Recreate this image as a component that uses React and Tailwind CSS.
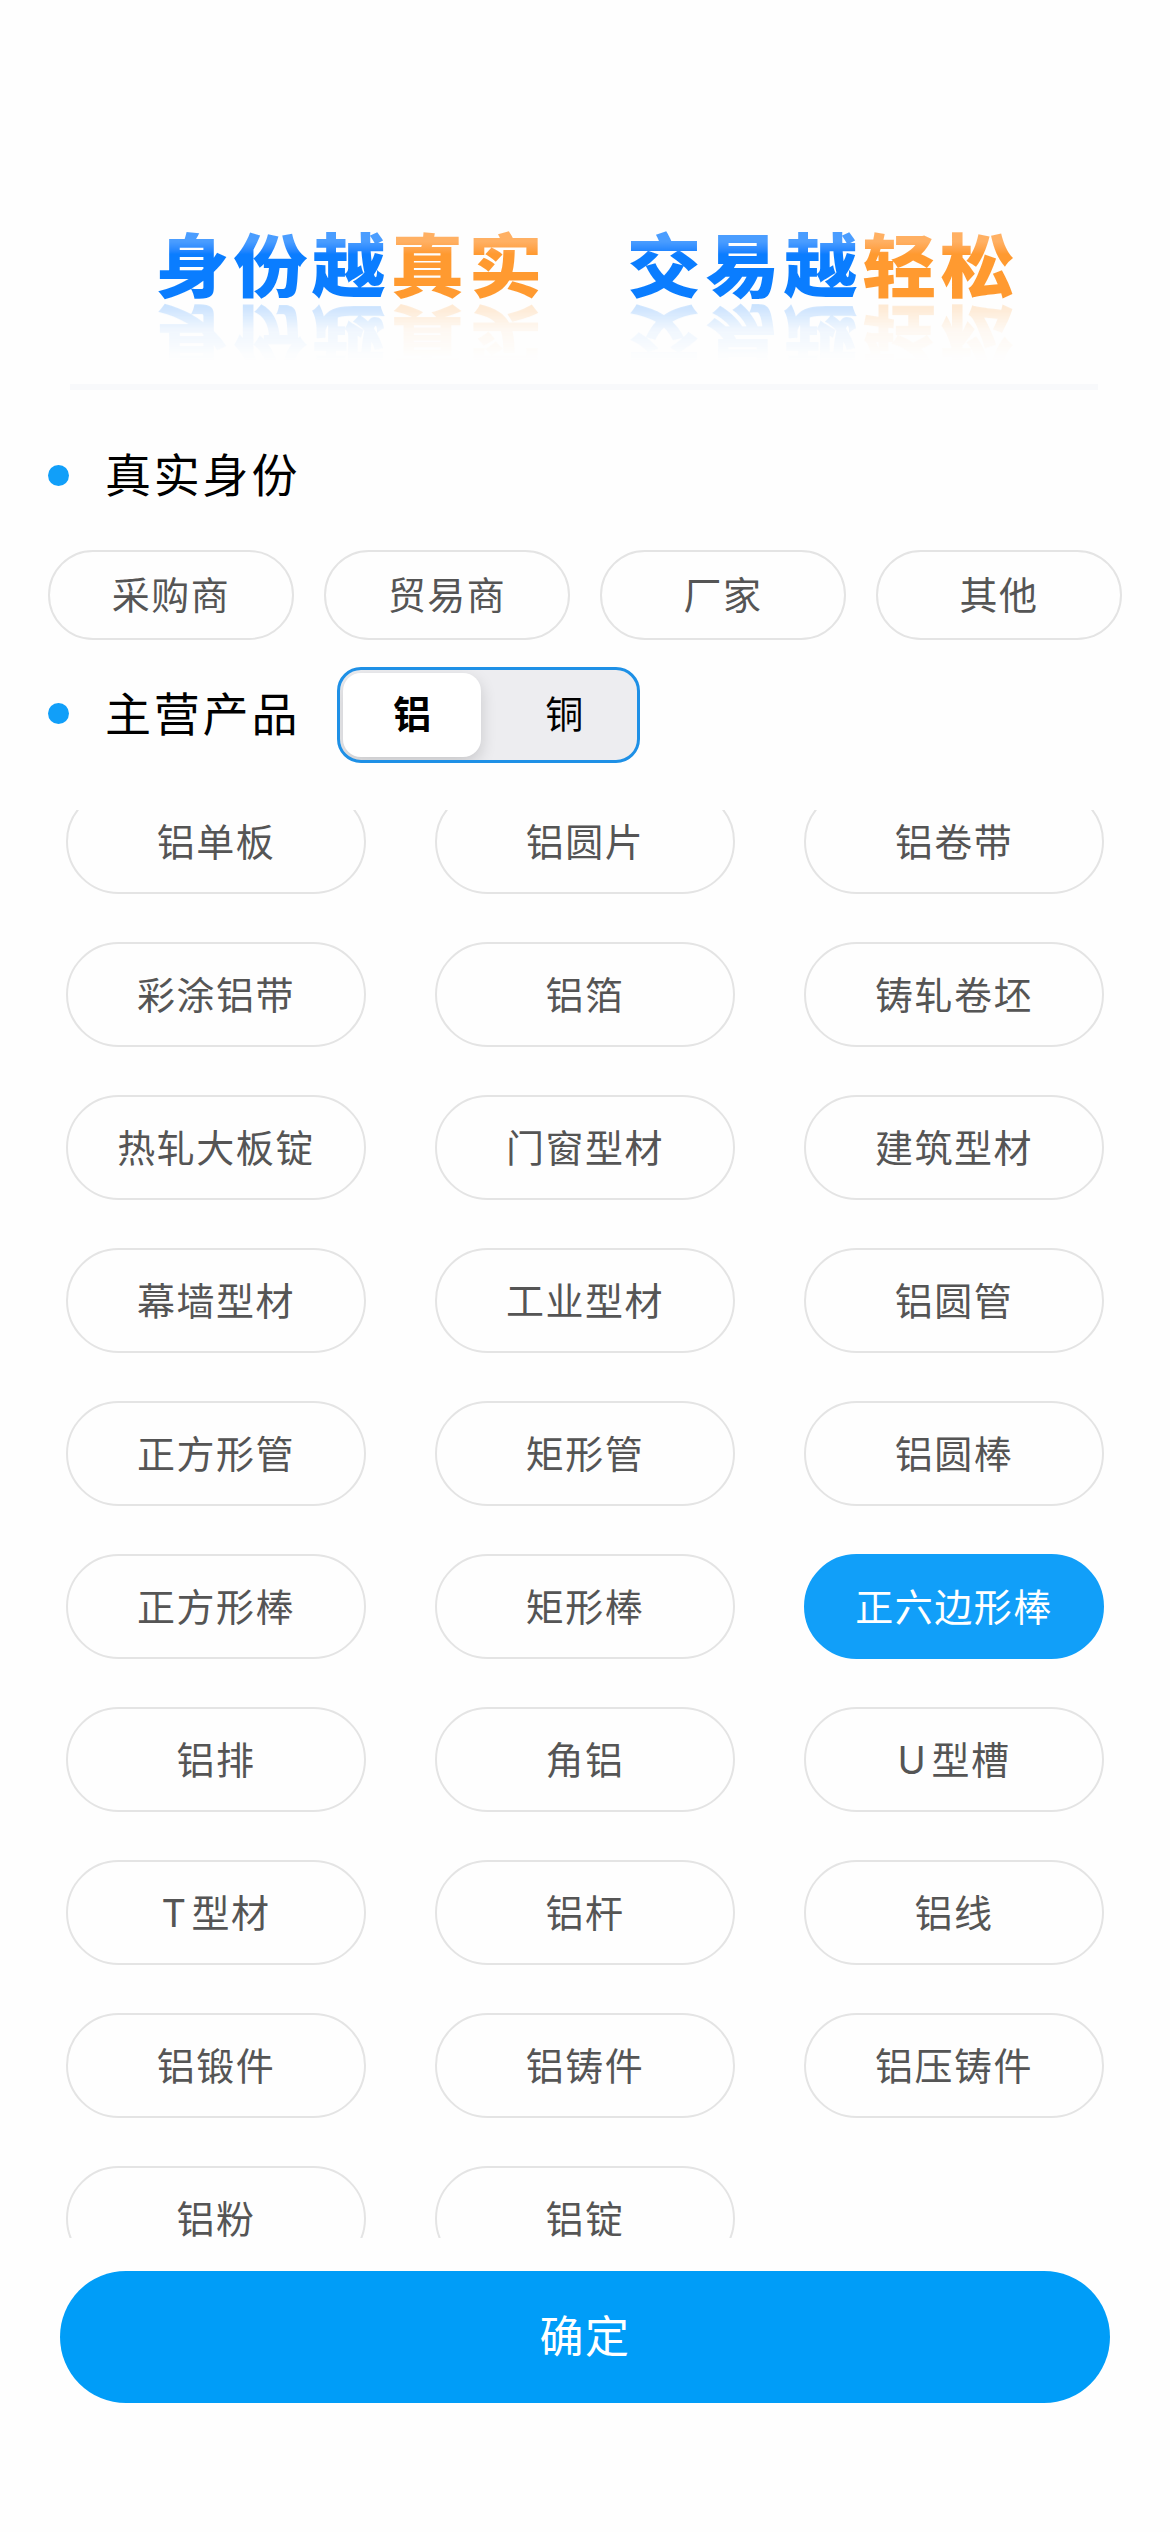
import { useState } from "react";

const identities = ["采购商", "贸易商", "厂家", "其他"];

const metals = ["铝", "铜"];

const products = [
  "铝单板", "铝圆片", "铝卷带",
  "彩涂铝带", "铝箔", "铸轧卷坯",
  "热轧大板锭", "门窗型材", "建筑型材",
  "幕墙型材", "工业型材", "铝圆管",
  "正方形管", "矩形管", "铝圆棒",
  "正方形棒", "矩形棒", "正六边形棒",
  "铝排", "角铝", "U型槽",
  "T型材", "铝杆", "铝线",
  "铝锻件", "铝铸件", "铝压铸件",
  "铝粉", "铝锭",
];

const Banner = () => (
  <header className="flex h-[390px] flex-col justify-between px-[70px] pt-[232px]">
    {/* Slogan with a faded reflection below it */}
    <div className="flex origin-top scale-y-[0.94] gap-[80px] pl-[85px] text-[74px] leading-[74px] font-black tracking-[4.4px] whitespace-nowrap [-webkit-box-reflect:below_0px_linear-gradient(transparent_15%,rgba(0,0,0,0.06)_60%,rgba(0,0,0,0.24))]">
      <p>
        <span className="bg-linear-to-b from-[#4a9dff] from-20% to-[#0a7dff] to-35% bg-clip-text text-transparent">身份越</span>
        <span className="bg-linear-to-b from-[#ffb063] from-20% to-[#ff9a30] to-35% bg-clip-text text-transparent">真实</span>
      </p>
      <p>
        <span className="bg-linear-to-b from-[#4a9dff] from-20% to-[#0a7dff] to-35% bg-clip-text text-transparent">交易越</span>
        <span className="bg-linear-to-b from-[#ffb063] from-20% to-[#ff9a30] to-35% bg-clip-text text-transparent">轻松</span>
      </p>
    </div>
    <div className="h-[6px] w-[1028px] bg-[#f8f9fb]" />
  </header>
);

const SectionTitle = ({ children, className }) => (
  <div className={`flex items-center ${className}`}>
    <span className="size-[21px] rounded-full bg-[#119ff9]" />
    <h2 className="ml-[36px] h-[60px] text-[46px] leading-[60px] tracking-[2.8px] text-black">{children}</h2>
  </div>
);

const Chip = ({ label, active, onClick, className }) => {
  // A leading latin letter stands a little apart from the characters
  const letter = /^[A-Z]/.test(label) ? label[0] : "";

  return (
    <button
      onClick={onClick}
      className={`flex items-center justify-center rounded-full border-2 text-[38px] leading-none tracking-[1.5px] ${className} ${
        active ? "border-[#119ff9] bg-[#119ff9] text-white" : "border-[#e4e4e4] text-[#555]"
      }`}
    >
      {letter && <span className="mr-1">{letter}</span>}
      {label.slice(letter.length)}
    </button>
  );
};

const App = () => {
  const [identity, setIdentity] = useState("");
  const [metal, setMetal] = useState("铝");
  const [selected, setSelected] = useState(["正六边形棒"]);

  // Add the product, or drop it when it is already picked
  const toggleProduct = (name) => {
    setSelected((prev) =>
      prev.includes(name) ? prev.filter((p) => p !== name) : [...prev, name]
    );
  };

  return (
    <div className="flex h-[2532px] w-[1170px] flex-col overflow-hidden bg-[#fefefe] font-[Inter,'Noto_Sans_CJK_SC',sans-serif]">
      <Banner />

      {/* Identity */}
      <section className="px-12 pt-[55px]">
        <SectionTitle>真实身份</SectionTitle>
        <div className="mt-[45px] flex gap-[30px]">
          {identities.map((name) => (
            <Chip
              key={name}
              label={name}
              active={identity === name}
              onClick={() => setIdentity(name)}
              className="h-[90px] w-[246px]"
            />
          ))}
        </div>
      </section>

      {/* Main products */}
      <section className="mt-[27px] flex items-center px-12">
        <SectionTitle className="-mt-[3px]">主营产品</SectionTitle>
        <div className="ml-[37px] flex h-[96px] w-[303px] overflow-hidden rounded-[24px] border-[3px] border-[#1e90e6] bg-[#ededf0] p-[3px]">
          {metals.map((name) => (
            <button
              key={name}
              onClick={() => setMetal(name)}
              className={`flex items-center justify-center rounded-[18px] pb-[2px] text-[38px] leading-none text-black ${
                metal === name
                  ? "w-[138px] bg-white font-bold shadow-[0_6px_16px_rgba(0,0,0,0.16)]"
                  : "ml-[3px] flex-1 pl-[10px]"
              }`}
            >
              {name}
            </button>
          ))}
        </div>
      </section>

      {/* Scrolled list, the first and last rows are cut off */}
      <div className="mt-[47px] h-[1428px] overflow-hidden px-[66px]">
        <div className="-mt-[21px] grid grid-cols-3 gap-x-[69px] gap-y-12">
          {products.map((name) => (
            <Chip
              key={name}
              label={name}
              active={selected.includes(name)}
              onClick={() => toggleProduct(name)}
              className="h-[105px] w-[300px]"
            />
          ))}
        </div>
      </div>

      <button className="mx-[60px] mt-[33px] flex h-[132px] items-center justify-center rounded-full bg-[#009df8] text-[44px] leading-none tracking-[1.4px] text-white">
        确定
      </button>
    </div>
  );
};

export default App;
